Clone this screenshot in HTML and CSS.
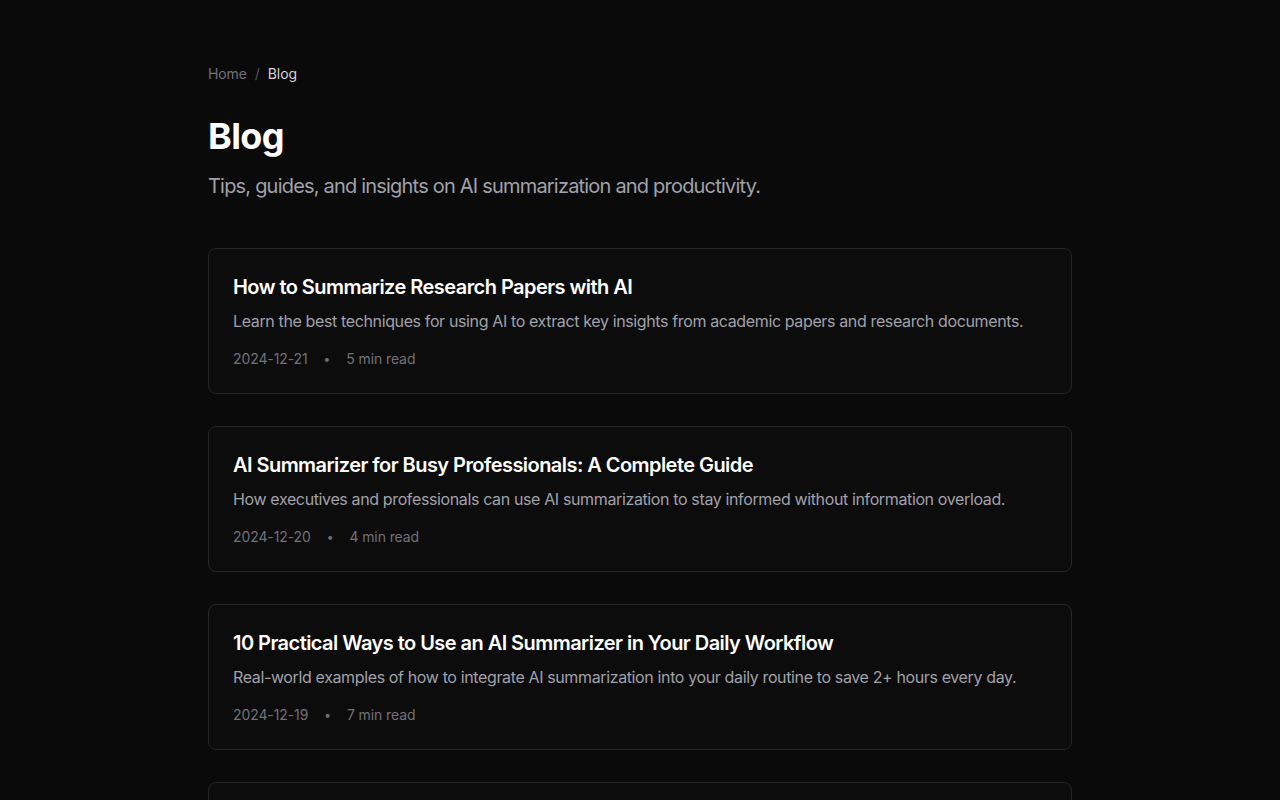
FILE: index.html
```html
<!DOCTYPE html>
<html lang="en">
<head>
<meta charset="utf-8">
<title>Blog</title>
<link rel="stylesheet" href="styles.css">
</head>
<body>
<main class="page">
  <nav class="crumbs">
    <a class="crumb-link" href="#">Home</a>
    <span class="crumb-sep">/</span>
    <span class="crumb-current">Blog</span>
  </nav>
  <h1 class="title">Blog</h1>
  <p class="subtitle">Tips, guides, and insights on AI summarization and productivity.</p>

  <div class="posts">
    <a class="card" href="#">
      <h2 class="card-title">How to Summarize Research Papers with AI</h2>
      <p class="card-desc">Learn the best techniques for using AI to extract key insights from academic papers and research documents.</p>
      <div class="meta"><span>2024-12-21</span><span class="dot">•</span><span>5 min read</span></div>
    </a>
    <a class="card" href="#">
      <h2 class="card-title">AI Summarizer for Busy Professionals: A Complete Guide</h2>
      <p class="card-desc">How executives and professionals can use AI summarization to stay informed without information overload.</p>
      <div class="meta"><span>2024-12-20</span><span class="dot">•</span><span>4 min read</span></div>
    </a>
    <a class="card" href="#">
      <h2 class="card-title">10 Practical Ways to Use an AI Summarizer in Your Daily Workflow</h2>
      <p class="card-desc">Real-world examples of how to integrate AI summarization into your daily routine to save 2+ hours every day.</p>
      <div class="meta"><span>2024-12-19</span><span class="dot">•</span><span>7 min read</span></div>
    </a>
    <a class="card" href="#">
      <h2 class="card-title">Getting Started with AI Summarization</h2>
      <p class="card-desc">A beginner's guide to understanding how AI summarizers work and how to get the most out of them.</p>
      <div class="meta"><span>2024-12-18</span><span class="dot">•</span><span>6 min read</span></div>
    </a>
  </div>
</main>
</body>
</html>
```

FILE: styles.css
```css
* { box-sizing: border-box; }
html, body {
  margin: 0;
  padding: 0;
  background: #0a0a0a;
  color: #fafafa;
  font-family: Inter, "Noto Sans", "Liberation Sans", sans-serif;
}
.page {
  max-width: 864px;
  margin: 0 auto;
  padding: 64px 0 64px;
}
.crumbs {
  display: flex;
  align-items: center;
  gap: 8px;
  font-size: 14px;
  line-height: 20px;
  letter-spacing: -0.1px;
}
.crumb-link { color: #71717a; text-decoration: none; }
.crumb-sep { color: #52525b; }
.crumb-current { color: #d4d4d8; }
.title {
  margin: 32px 0 0;
  font-size: 36px;
  line-height: 40px;
  font-weight: 700;
  color: #ffffff;
  letter-spacing: -0.6px;
}
.subtitle {
  margin: 16px 0 0;
  font-size: 20px;
  line-height: 28px;
  color: #a1a1aa;
  letter-spacing: -0.8px;
}
.posts {
  margin-top: 48px;
  display: flex;
  flex-direction: column;
  gap: 32px;
}
.card {
  display: block;
  text-decoration: none;
  background: #0c0c0c;
  border: 1px solid #262626;
  border-radius: 8px;
  padding: 24px;
}
.card-title {
  margin: 0;
  font-size: 20px;
  line-height: 28px;
  font-weight: 600;
  color: #ffffff;
  letter-spacing: -0.55px;
}
.card-desc {
  margin: 8px 0 0;
  font-size: 16px;
  line-height: 24px;
  color: #a1a1aa;
  letter-spacing: -0.37px;
}
.meta {
  margin-top: 16px;
  display: flex;
  align-items: center;
  gap: 16px;
  font-size: 14px;
  line-height: 20px;
  color: #71717a;
  letter-spacing: -0.1px;
}
.dot { font-size: 12px; color: #71717a; }
```
